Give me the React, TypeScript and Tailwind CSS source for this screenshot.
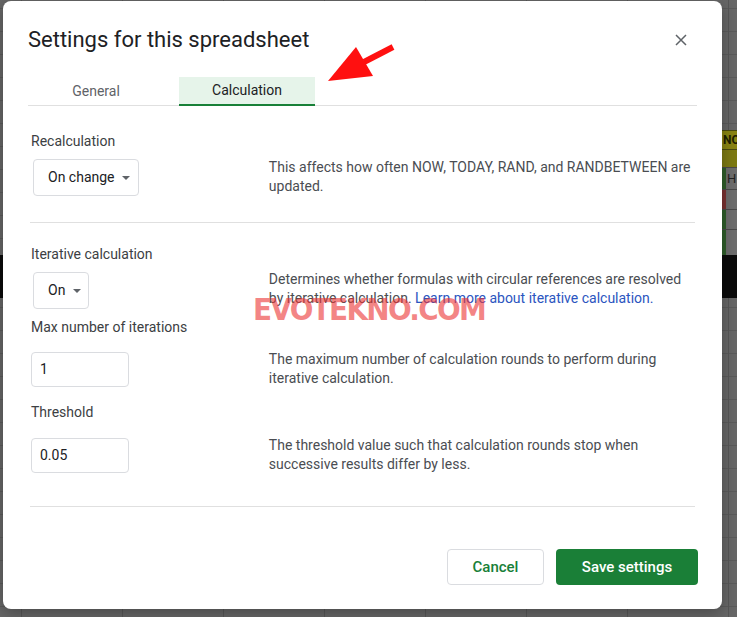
import React from 'react';

const Caret: React.FC = () => (
  <svg width="8" height="4" viewBox="0 0 8 4" className="text-[#5f6368]">
    <path d="M0 0h8L4 4z" fill="currentColor" />
  </svg>
);

const SheetStrip: React.FC = () => (
  <div className="flex flex-col w-[15px] h-full">
    <div className="h-[130px]" />
    <div className="h-[20px] bg-[#8a8512] border-y border-[#4a4a10] text-[12px] font-bold leading-[18px] text-[#1f1f00] pl-[1px] overflow-hidden whitespace-nowrap">NO</div>
    <div className="h-[18px] bg-[#7d7a12] border-b border-[#4a4a4a]" />
    <div className="h-[22px] flex border-b border-[#4a4a4a]">
      <div className="w-[4px] bg-[#2e5e2a]" />
      <div className="flex-1 bg-[#6e6e6e] text-[13px] leading-[21px] text-[#222] pl-[1px] overflow-hidden">H</div>
    </div>
    <div className="h-[20px] flex border-b border-[#4a4a4a]">
      <div className="w-[4px] bg-[#7a3232]" />
      <div className="flex-1 bg-[#6e6e6e]" />
    </div>
    <div className="h-[20px] flex border-b border-[#4a4a4a]">
      <div className="w-[4px] bg-[#2e5e2a]" />
      <div className="flex-1 bg-[#6e6e6e]" />
    </div>
    <div className="h-[25px] flex">
      <div className="w-[4px] bg-[#2e5e2a]" />
      <div className="flex-1 bg-[#6e6e6e]" />
    </div>
    <div className="h-[43px] bg-[#0b0b0b]" />
  </div>
);

export default function App() {
  return (
    <div className="relative w-[737px] h-[617px] overflow-hidden bg-[#676767] bg-[linear-gradient(to_right,#575757_1px,transparent_1px),linear-gradient(to_bottom,#5b5b5b_1px,transparent_1px)] bg-[size:101px_23px] bg-[position:21px_8px] font-['Roboto',sans-serif]">
      {/* spreadsheet behind the dialog */}
      <div className="flex h-full">
        <div className="w-[3px] flex flex-col">
          <div className="h-[255px]" />
          <div className="h-[43px] bg-[#0b0b0b]" />
        </div>
        <div className="flex-1" />
        <SheetStrip />
      </div>

      {/* dialog */}
      <div className="absolute left-[3px] top-[1px] w-[719px] h-[608px] bg-white rounded-[8px] shadow-[0_4px_16px_rgba(0,0,0,0.3)]">
        <div className="flex items-center justify-between pt-[25px] pl-[25px] pr-[34px]">
          <h1 className="text-[22px] leading-[28px] text-[#202124]">Settings for this spreadsheet</h1>
          <svg width="14" height="14" viewBox="0 0 14 14" className="text-[#5f6368]">
            <path d="M2 2l10 10M12 2L2 12" stroke="currentColor" strokeWidth="1.5" />
          </svg>
        </div>

        <div className="mt-[23px] ml-[25px] mr-[25px] flex gap-[15px] border-b border-[#e0e0e0]">
          <div className="w-[136px] h-[28px] flex items-center justify-center text-[14px] text-[#5f6368]">General</div>
          <div className="w-[136px] h-[29px] -mb-px flex items-center justify-center text-[14px] text-[#202124] bg-[#e6f4ea] border-b-2 border-[#188038]">Calculation</div>
        </div>

        <div className="px-[27px] text-[14px] text-[#3c4043]">
          <section className="pt-[25px] pb-[26px] border-b border-[#e0e0e0]">
            <div className="pl-[1px] leading-[20px]">Recalculation</div>
            <div className="mt-[8px] flex">
              <div className="w-[241px] pl-[3px]">
                <div className="w-[106px] h-[37px] border border-[#dadce0] rounded-[4px] flex items-center justify-between pl-[14px] pr-[8px] text-[#202124]">
                  <span>On change</span>
                  <Caret />
                </div>
              </div>
              <p className="-mt-[1px] w-[430px] leading-[19px] text-[#4a4d52]">
                This affects how often NOW, TODAY, RAND, and RANDBETWEEN are updated.
              </p>
            </div>
          </section>

          <section className="pt-[21px] pb-[32px] border-b border-[#e0e0e0]">
            <div className="pl-[1px] leading-[20px]">Iterative calculation</div>
            <div className="mt-[8px] flex">
              <div className="w-[241px] pl-[3px]">
                <div className="w-[56px] h-[37px] border border-[#dadce0] rounded-[4px] flex items-center justify-between pl-[14px] pr-[7px] text-[#202124]">
                  <span>On</span>
                  <Caret />
                </div>
              </div>
              <p className="-mt-[2px] w-[430px] leading-[19px] text-[#4a4d52]">
                Determines whether formulas with circular references are resolved by iterative calculation.{' '}
                <span className="text-[#2b55c0]">Learn more about iterative calculation.</span>
              </p>
            </div>

            <div className="mt-[8px] pl-[1px] leading-[20px]">Max number of iterations</div>
            <div className="mt-[15px] flex">
              <div className="w-[241px] pl-[1px]">
                <div className="w-[98px] h-[35px] border border-[#dadce0] rounded-[4px] flex items-center pl-[8px] text-[#202124]">1</div>
              </div>
              <p className="-mt-[2px] w-[430px] leading-[19px] text-[#4a4d52]">
                The maximum number of calculation rounds to perform during iterative calculation.
              </p>
            </div>

            <div className="mt-[14px] pl-[1px] leading-[20px]">Threshold</div>
            <div className="mt-[16px] flex">
              <div className="w-[241px] pl-[1px]">
                <div className="w-[98px] h-[35px] border border-[#dadce0] rounded-[4px] flex items-center pl-[8px] text-[#202124]">0.05</div>
              </div>
              <p className="-mt-[2px] w-[430px] leading-[19px] text-[#4a4d52]">
                The threshold value such that calculation rounds stop when successive results differ by less.
              </p>
            </div>
          </section>
        </div>

        <div className="pt-[42px] pr-[24px] flex justify-end gap-[12px]">
          <button className="w-[97px] h-[36px] border border-[#dadce0] rounded-[4px] text-[15px] font-medium text-[#188038]">Cancel</button>
          <button className="w-[142px] h-[36px] rounded-[4px] bg-[#1a7f37] text-[15px] font-medium text-white">Save settings</button>
        </div>

        {/* watermark */}
        <div className="absolute left-[250px] top-[292px] text-[31px] leading-[32px] tracking-[-1.7px] font-bold font-['DejaVu_Sans_Condensed',sans-serif] text-[rgba(235,50,50,0.6)] pointer-events-none whitespace-nowrap">
          EVOTEKNO.COM
        </div>
      </div>

      {/* annotation arrow */}
      <svg className="absolute left-0 top-0 pointer-events-none" width="737" height="617">
        <path d="M393 47L364 62" stroke="#ff1010" strokeWidth="6" />
        <polygon points="328,81 356,47 373,76" fill="#ff1010" />
      </svg>
    </div>
  );
}
